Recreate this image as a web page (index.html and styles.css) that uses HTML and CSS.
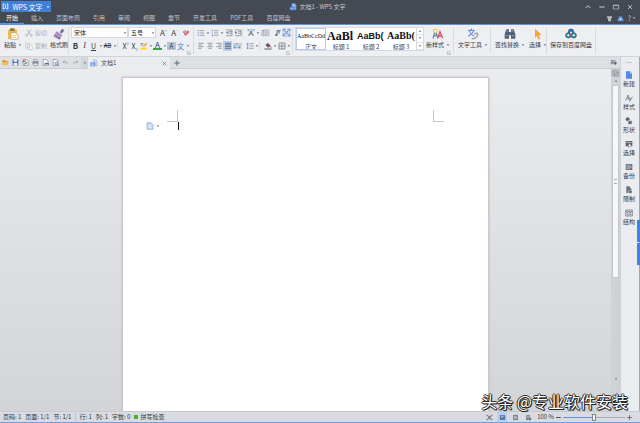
FILE: index.html
```html
<!DOCTYPE html>
<html lang="zh-CN">
<head>
<meta charset="utf-8">
<title>文档1 - WPS 文字</title>
<link rel="stylesheet" href="styles.css">
</head>
<body>
<svg class="sprite" aria-hidden="true">
  <symbol id="logo" viewBox="0 0 24 24"><path d="M9 3H4v17h4l4-5 4 5h4V3h-4M12 5v10" fill="none" stroke="#fff" stroke-width="3"/></symbol>
  <symbol id="clip" viewBox="0 0 36 36"><path d="M3 5h27v28H3z" fill="#edbd55"/><path d="M9 1h14v8H9z" fill="#8f754b"/><path d="M12 14h13l8 7v14H12z" fill="#fff" stroke="#c3964b" stroke-width="2"/><path d="M16 23h12M16 29h12" stroke="#e6b252" stroke-width="2"/></symbol>
  <symbol id="cut" viewBox="0 0 24 24"><path d="M6 2l11 15M18 2L7 17" fill="none" stroke="#a7aaaf" stroke-width="2.5"/><circle cx="5" cy="19" r="3" fill="none" stroke="#a7aaaf" stroke-width="2"/><circle cx="19" cy="19" r="3" fill="none" stroke="#a7aaaf" stroke-width="2"/></symbol>
  <symbol id="copy" viewBox="0 0 24 24"><path d="M2 4h11v14H2zM8 8h9l5 5v10H8z" fill="#f4f5f6" stroke="#b4b7bc" stroke-width="1.7"/></symbol>
  <symbol id="brush" viewBox="0 0 36 36"><path d="M20 12L28 2l6 5-8 10z" fill="#7d6796"/><path d="M11 10l17 12-4 6L6 16z" fill="#a18ab9"/><path d="M6 17l18 12-5 6L1 25z" fill="#8872a0"/><path d="M8 23l-2 4M14 26l-3 5" stroke="#cbbcd9" stroke-width="2"/></symbol>
  <symbol id="eraser" viewBox="0 0 24 24"><path d="M2 9l7-6 6 8-6 5z" fill="#75829a"/><path d="M9 11l9-7 4 5-10 11-6-3z" fill="#e1606b"/><path d="M6 5l6 9" stroke="#fff" stroke-width="2"/></symbol>
  <symbol id="bullets" viewBox="0 0 24 24"><path d="M2 5h3M2 12h3M2 19h3" stroke="#467fcd" stroke-width="3"/><path d="M8 5h14M8 12h14M8 19h14" stroke="#777d87" stroke-width="2"/></symbol>
  <symbol id="numbers" viewBox="0 0 24 24"><path d="M4 2v6M2 12h4M2 19h4M5 16v6" stroke="#467fcd" stroke-width="2"/><path d="M9 5h13M9 12h13M9 19h13" stroke="#777d87" stroke-width="2"/></symbol>
  <symbol id="outdent" viewBox="0 0 24 24"><path d="M3 3h18M12 8h9M12 13h9M3 20h18M21 3v17" fill="none" stroke="#747a84" stroke-width="2"/><path d="M10 6v9l-7-4z" fill="#467fcd"/></symbol>
  <symbol id="indent" viewBox="0 0 24 24"><path d="M3 3h18M12 8h9M12 13h9M3 20h18M21 3v17" fill="none" stroke="#747a84" stroke-width="2"/><path d="M3 6v9l7-4z" fill="#467fcd"/></symbol>
  <symbol id="scale" viewBox="0 0 24 24"><path d="M5 21l7-15 7 15M8 15h8" fill="none" stroke="#505762" stroke-width="2.4"/><path d="M2 3h20M5 0L2 3l3 4M19 0l3 3-3 4" fill="none" stroke="#467fcd" stroke-width="1.7"/></symbol>
  <symbol id="tabs" viewBox="0 0 24 24"><path d="M8 3h14v17H2V9h20M8 3v17M15 3v17M2 15h20" fill="none" stroke="#9da6b4" stroke-width="2"/><path d="M2 5h8" stroke="#71a0df" stroke-width="3"/></symbol>
  <symbol id="mark" viewBox="0 0 24 24"><path d="M9 19V5h11M15 5v9" fill="none" stroke="#4c535e" stroke-width="2.5"/><circle cx="7" cy="18" r="3" fill="#4c535e"/></symbol>
  <symbol id="frame" viewBox="0 0 24 24"><path d="M1 1h22v22H1z" fill="#c8d9f3"/><path d="M3 9V3h6M15 3h6v6M21 15v6h-6M9 21H3v-6M7 7l10 10M17 7L7 17" fill="none" stroke="#517bb9" stroke-width="2"/></symbol>
  <symbol id="left" viewBox="0 0 24 24"><path d="M4 4h16M4 9h10M4 14h16M4 19h10" stroke="#737982" stroke-width="2"/></symbol>
  <symbol id="center" viewBox="0 0 24 24"><path d="M4 4h16M7 9h10M4 14h16M7 19h10" stroke="#737982" stroke-width="2"/></symbol>
  <symbol id="right" viewBox="0 0 24 24"><path d="M4 4h16M10 9h10M4 14h16M10 19h10" stroke="#737982" stroke-width="2"/></symbol>
  <symbol id="justify" viewBox="0 0 24 24"><path d="M3 4h18M3 9h18M3 14h18M3 19h18" stroke="#596479" stroke-width="2.5"/></symbol>
  <symbol id="spread" viewBox="0 0 24 24"><path d="M3 3v17M21 3v17M7 5h10M7 9h10" stroke="#747d8c" stroke-width="2"/><path d="M3 16h18M8 12l-5 4 5 4M16 12l5 4-5 4" fill="none" stroke="#4d87d6" stroke-width="2"/></symbol>
  <symbol id="spacing" viewBox="0 0 24 24"><path d="M5 3v18M2 7l3-4 3 4M2 17l3 4 3-4" fill="none" stroke="#467fcd" stroke-width="2"/><path d="M11 5h12M11 12h12M11 19h12" stroke="#777d87" stroke-width="2"/></symbol>
  <symbol id="fill" viewBox="0 0 24 24"><path d="M4 9l8-6 8 8-8 6z" fill="#535a66"/><path d="M20 11l3 6h-5z" fill="#d35d51"/><path d="M1 19h22v4H1z" fill="#7b8089"/></symbol>
  <symbol id="border" viewBox="0 0 24 24"><path d="M3 3h18v18H3zM12 3v18M3 12h18" fill="none" stroke="#5f6671" stroke-width="2"/></symbol>
  <symbol id="pen" viewBox="0 0 24 24"><path d="M1 17h20v6H1z" fill="#f9df22"/><path d="M8 16l3-6 8-8 3 3-8 8z" fill="#ec9d34"/><path d="M2 5h8M2 9h6" stroke="#555b65" stroke-width="2"/></symbol>
  <symbol id="styles" viewBox="0 0 36 36"><path d="M3 31l7-22 8 22M6 23h10" fill="none" stroke="#5685c4" stroke-width="4"/><path d="M17 31l7-20 8 20M20 24h9" fill="none" stroke="#d65767" stroke-width="4"/><circle cx="10" cy="9" r="6" fill="#fff4bf" stroke="#f4bb43" stroke-width="3"/></symbol>
  <symbol id="texttool" viewBox="0 0 36 36"><path d="M3 7h20M13 2v5M7 9q5 12 15 16M20 9Q16 20 3 25" fill="none" stroke="#4a80d9" stroke-width="3"/><path d="M22 18q8-5 10 1t-7 11q-8 5-10-1" fill="none" stroke="#999fa7" stroke-width="4"/></symbol>
  <symbol id="find" viewBox="0 0 36 36"><path d="M7 4h8v8h6V4h8l5 14v14H21V22h-6v10H2V18z" fill="#50617a"/><path d="M5 23h7M24 23h7M8 9h6M22 9h6" stroke="#b0bdce" stroke-width="2"/></symbol>
  <symbol id="cursor" viewBox="0 0 36 36"><path d="M9 2l20 19-9 1 5 10-5 3-5-11-6 6z" fill="#f6a629"/></symbol>
  <symbol id="cloud" viewBox="0 0 36 36"><circle cx="18" cy="11" r="8" fill="#267ebd" stroke="#333b42" stroke-width="2"/><circle cx="10" cy="22" r="8" fill="#21a2ae" stroke="#333b42" stroke-width="2"/><circle cx="26" cy="22" r="8" fill="#21a2ae" stroke="#333b42" stroke-width="2"/><circle cx="18" cy="14" r="3" fill="#fff"/><circle cx="10" cy="22" r="3" fill="#fff"/><circle cx="26" cy="22" r="3" fill="#fff"/><path d="M13 19l5-3 5 3-5 5z" fill="#dc3b40"/></symbol>
  <symbol id="folder" viewBox="0 0 24 24"><path d="M2 3h8l3 4h8v4H7L2 20z" fill="#d99c2e"/><path d="M7 10h16l-4 11H2z" fill="#f6bc4b"/></symbol>
  <symbol id="save" viewBox="0 0 24 24"><path d="M2 2h20v20H2z" fill="#4779bf"/><path d="M7 2h10v7H7zM6 14h12v8H6z" fill="#eef5ff"/></symbol>
  <symbol id="pdf" viewBox="0 0 24 24"><path d="M4 2h12l5 5v15H4z" fill="#fff" stroke="#676d77" stroke-width="2"/><path d="M2 5h11v6H2z" fill="#d85a54"/><path d="M7 18c5-2 9-4 10-7" fill="none" stroke="#3d9d82" stroke-width="4"/></symbol>
  <symbol id="print" viewBox="0 0 24 24"><path d="M6 2h12v6H6z" fill="#fff" stroke="#6e7888" stroke-width="2"/><path d="M2 8h20v10H2z" fill="#7d899d"/><path d="M6 14h12v8H6z" fill="#f7fbff" stroke="#6e7888" stroke-width="2"/></symbol>
  <symbol id="quickprint" viewBox="0 0 24 24"><path d="M4 2h12l4 4v16H4z" fill="#fff" stroke="#667081" stroke-width="2"/><path d="M9 13h14v8H9z" fill="#456d9e"/><path d="M12 10h8v4h-8zM12 18h8v4h-8z" fill="#dce9f8"/></symbol>
  <symbol id="preview" viewBox="0 0 24 24"><path d="M4 2h12l4 4v16H4z" fill="#fff" stroke="#667081" stroke-width="2"/><circle cx="15" cy="15" r="5" fill="#c9e0f8" stroke="#456d9e" stroke-width="2"/><path d="M18 19l5 4" stroke="#456d9e" stroke-width="3"/></symbol>
  <symbol id="undo" viewBox="0 0 24 24"><path d="M9 5l-5 5 5 5M4 10h9q6 0 6 8" fill="none" stroke="#9298a1" stroke-width="2.5"/></symbol>
  <symbol id="redo" viewBox="0 0 24 24"><path d="M15 5l5 5-5 5M20 10h-9q-6 0-6 8" fill="none" stroke="#9298a1" stroke-width="2.5"/></symbol>
  <symbol id="doc" viewBox="0 0 24 24"><path d="M8 1h9l5 5v15H8z" fill="#70a5ed"/><path d="M2 12h13v10H2z" fill="#4a88de"/><path d="M5 16h7M11 7h7" stroke="#e6f1ff" stroke-width="2"/></symbol>
  <symbol id="tabdoc" viewBox="0 0 24 24"><path d="M9 1h9l4 5v16H9z" fill="#b2cbea"/><path d="M1 10h14v12H1z" fill="#6c9bd5"/><path d="M4 15h8M12 7h7M4 19h8" stroke="#e7f1fd" stroke-width="2"/></symbol>
  <symbol id="new" viewBox="0 0 24 24"><path d="M3 1h12l6 6v16H3z" fill="#4f88e5"/><path d="M15 1v7h6z" fill="#b3cdf8"/></symbol>
  <symbol id="para" viewBox="0 0 24 24"><path d="M3 2h12l6 6v14H3z" fill="#c3d6f4" stroke="#86a9dd" stroke-width="2"/><path d="M7 11h10M7 16h10" stroke="#fff" stroke-width="2"/></symbol>
  <symbol id="style" viewBox="0 0 24 24"><path d="M2 20L9 3l5 17M5 14h7M13 10l4 7 5-9M17 17l-3 6" fill="none" stroke="#59606c" stroke-width="2"/></symbol>
  <symbol id="shape" viewBox="0 0 24 24"><circle cx="8" cy="7" r="6" fill="#5c6470"/><path d="M9 11h12v11H9z" fill="#5c6470" stroke="#e9eaed" stroke-width="2"/></symbol>
  <symbol id="select" viewBox="0 0 24 24"><path d="M2 3h20v16H2z" fill="#59616d"/><path d="M4 7h16" stroke="#e8eaed" stroke-width="2"/><path d="M11 10l10 8-7 1-3 4z" fill="#fff" stroke="#59616d"/></symbol>
  <symbol id="backup" viewBox="0 0 24 24"><path d="M2 3h20v18H2z" fill="#6f7782"/><path d="M12 6v12M5 8h4M5 12h4M5 16h4M15 8l4 4-4 4" fill="none" stroke="#e5e8ec" stroke-width="2"/></symbol>
  <symbol id="limit" viewBox="0 0 24 24"><path d="M4 1h9l4 5v15H4z" fill="#68707c"/><path d="M11 13h10v9H11z" fill="#535b67" stroke="#eceef0" stroke-width="2"/><path d="M13 13v-3h6v3" fill="none" stroke="#535b67" stroke-width="2"/></symbol>
  <symbol id="struct" viewBox="0 0 24 24"><path d="M2 3h20v18H2zM2 7h20M12 7v14" fill="none" stroke="#646c78" stroke-width="2"/><path d="M5 11h4M5 16h4M15 11h4M15 16h4" stroke="#646c78" stroke-width="3"/></symbol>
  <symbol id="down" viewBox="0 0 12 12"><path d="M2 4h8l-4 5z" fill="currentColor"/></symbol>
  <symbol id="up" viewBox="0 0 12 12"><path d="M2 8h8L6 3z" fill="currentColor"/></symbol>
  <symbol id="corner" viewBox="0 0 12 12"><path d="M1 1h9M1 1v9h4M5 5l5 5M10 5v5H5" fill="none" stroke="#8d949f" stroke-width="1.4"/></symbol>
  <symbol id="chevron" viewBox="0 0 24 24"><path d="M5 15l7-7 7 7" fill="none" stroke="#c8cbd1" stroke-width="3"/></symbol>
  <symbol id="min" viewBox="0 0 24 24"><path d="M4 12h16" stroke="currentColor" stroke-width="3"/></symbol>
  <symbol id="max" viewBox="0 0 24 24"><path d="M4 6h16v12H4zM4 8h16" fill="none" stroke="currentColor" stroke-width="2"/></symbol>
  <symbol id="panes" viewBox="0 0 24 24"><path d="M4 4h14v11H4zM8 9h13v11H8z" fill="#e4e6ea" stroke="#6a717d" stroke-width="2"/></symbol>
  <symbol id="close" viewBox="0 0 24 24"><path d="M6 6l12 12M18 6L6 18" stroke="currentColor" stroke-width="2.5"/></symbol>
  <symbol id="plus" viewBox="0 0 24 24"><path d="M4 12h16M12 4v16" stroke="#5f6671" stroke-width="3"/></symbol>
  <symbol id="shirt" viewBox="0 0 24 24"><path d="M3 5l6-2q3 4 6 0l6 2-1 6h-3v10H7V11H4z" fill="#b9bdc5"/></symbol>
  <symbol id="user" viewBox="0 0 24 24"><path d="M5 11q0-8 7-8t7 8l3 2v8H2v-8z" fill="#5890df"/><circle cx="12" cy="14" r="3" fill="#fff"/></symbol>
  <symbol id="list" viewBox="0 0 24 24"><path d="M3 6h13M3 11h8M3 16h6" stroke="#5d6470" stroke-width="3"/><path d="M11 12h12l-6 8zM18 5v9" fill="#5d6470" stroke="#5d6470" stroke-width="2"/></symbol>
  <symbol id="full" viewBox="0 0 24 24"><path d="M3 8V4h5M16 4h5v4M21 16v4h-5M8 20H3v-4M8 8h8v8H8z" fill="#8b929c" stroke="#5f6772" stroke-width="2"/></symbol>
  <symbol id="pageview" viewBox="0 0 24 24"><path d="M3 4h18v16H3z" fill="#526b93"/><path d="M6 8h12M6 12h7" stroke="#d9e7fa" stroke-width="2"/></symbol>
  <symbol id="outline" viewBox="0 0 24 24"><path d="M4 3h16v18H4z" fill="#737b86"/><path d="M7 8h10M7 12h10M7 16h10" stroke="#e4e6e9" stroke-width="2"/></symbol>
  <symbol id="web" viewBox="0 0 24 24"><path d="M4 3h13v18H4z" fill="#7a828e"/><path d="M7 7h7M7 11h7" stroke="#e4e6e9" stroke-width="2"/><circle cx="17" cy="17" r="5" fill="#606975" stroke="#e4e6e9"/></symbol>
</svg>

<div class="app">
  <header class="titlebar">
    <button class="brand"><svg class="i7"><use href="#logo"/></svg><span>WPS 文字</span><svg class="caret"><use href="#down"/></svg></button>
    <h1 class="title"><svg class="i8"><use href="#doc"/></svg>文档1 - WPS 文字</h1>
    <div class="window-buttons">
      <button aria-label="折叠"><svg class="i8"><use href="#chevron"/></svg></button>
      <button aria-label="最小化"><svg class="i8"><use href="#min"/></svg></button>
      <button aria-label="最大化"><svg class="i8"><use href="#max"/></svg></button>
      <button aria-label="关闭"><svg class="i8"><use href="#close"/></svg></button>
    </div>
  </header>
  <nav class="menu">
    <a href="#" class="active">开始</a><a href="#">插入</a><a href="#">页面布局</a><a href="#">引用</a><a href="#">审阅</a><a href="#">视图</a><a href="#">章节</a><a href="#">开发工具</a><a href="#">PDF工具</a><a href="#">百度网盘</a>
    <div class="menu-right">
      <button aria-label="皮肤"><svg class="i7"><use href="#shirt"/></svg></button>
      <button aria-label="用户"><svg class="i7"><use href="#user"/></svg></button>
      <button class="help">?<svg class="caret"><use href="#down"/></svg></button>
    </div>
  </nav>

  <section class="ribbon">
    <div class="group clipboard">
      <button class="big"><svg class="i12"><use href="#clip"/></svg><span>粘贴<svg class="caret"><use href="#down"/></svg></span></button>
      <div class="stack">
        <button class="mini" disabled><svg class="i8"><use href="#cut"/></svg>剪切</button>
        <button class="mini" disabled><svg class="i8"><use href="#copy"/></svg>复制</button>
      </div>
      <button class="big"><svg class="i12"><use href="#brush"/></svg><span>格式刷</span></button>
    </div>
    <div class="group font">
      <div class="row fields">
        <label class="field family"><select aria-label="字体"><option>宋体</option></select><svg class="caret"><use href="#down"/></svg></label>
        <label class="field size"><select aria-label="字号"><option>五号</option></select><svg class="caret"><use href="#down"/></svg></label>
        <button class="t grow">A<sup>+</sup></button><button class="t grow">A<sup>-</sup></button>
        <button class="t grow" aria-label="清除格式"><svg class="i8"><use href="#eraser"/></svg></button>
      </div>
      <div class="row">
        <button class="t bold">B</button><button class="t italic">I</button><button class="t under">U</button><button class="c" aria-label="更多"><svg class="caret"><use href="#down"/></svg></button><button class="t strike">AB</button><button class="c" aria-label="更多"><svg class="caret"><use href="#down"/></svg></button><i class="sep"></i><button class="t">X<sup>2</sup></button><button class="t">X<sub>2</sub></button><button class="t" aria-label="突出显示"><svg class="i8"><use href="#pen"/></svg></button><button class="c" aria-label="更多"><svg class="caret"><use href="#down"/></svg></button><button class="t color">A</button><button class="c" aria-label="更多"><svg class="caret"><use href="#down"/></svg></button><button class="t shade">A</button><button class="t phonetic">文</button><button class="c" aria-label="更多"><svg class="caret"><use href="#down"/></svg></button>
      </div>
      <button class="launcher" aria-label="字体设置"><svg class="caret"><use href="#corner"/></svg></button>
    </div>
    <div class="group para">
      <div class="row">
        <button class="t" aria-label="项目符号"><svg class="i8"><use href="#bullets"/></svg></button><button class="c" aria-label="更多"><svg class="caret"><use href="#down"/></svg></button><button class="t" aria-label="编号"><svg class="i8"><use href="#numbers"/></svg></button><button class="c" aria-label="更多"><svg class="caret"><use href="#down"/></svg></button><button class="t" aria-label="减少缩进"><svg class="i8"><use href="#outdent"/></svg></button><button class="t" aria-label="增加缩进"><svg class="i8"><use href="#indent"/></svg></button><i class="sep"></i><button class="t" aria-label="字符缩放"><svg class="i8"><use href="#scale"/></svg></button><button class="c" aria-label="更多"><svg class="caret"><use href="#down"/></svg></button><button class="t" aria-label="制表位"><svg class="i8"><use href="#tabs"/></svg></button><i class="sep"></i><button class="t" aria-label="段落标记"><svg class="i8"><use href="#mark"/></svg></button><button class="t" aria-label="段落布局"><svg class="i9"><use href="#frame"/></svg></button>
      </div>
      <div class="row">
        <button class="t" aria-label="左对齐"><svg class="i8"><use href="#left"/></svg></button><button class="t" aria-label="居中"><svg class="i8"><use href="#center"/></svg></button><button class="t" aria-label="右对齐"><svg class="i8"><use href="#right"/></svg></button><button class="t on" aria-label="两端对齐"><svg class="i8"><use href="#justify"/></svg></button><button class="t" aria-label="分散对齐"><svg class="i8"><use href="#spread"/></svg></button><i class="sep"></i><button class="t" aria-label="行距"><svg class="i8"><use href="#spacing"/></svg></button><button class="c" aria-label="更多"><svg class="caret"><use href="#down"/></svg></button><i class="sep"></i><button class="t" aria-label="底纹"><svg class="i8"><use href="#fill"/></svg></button><button class="c" aria-label="更多"><svg class="caret"><use href="#down"/></svg></button><button class="t" aria-label="边框"><svg class="i8"><use href="#border"/></svg></button><button class="c" aria-label="更多"><svg class="caret"><use href="#down"/></svg></button>
      </div>
      <button class="launcher" aria-label="段落设置"><svg class="caret"><use href="#corner"/></svg></button>
    </div>
    <div class="group style-group">
      <div class="gallery">
        <button class="on"><span class="sample">AaBbCcDd</span><span>正文</span></button>
        <button><span class="sample h1">AaBl</span><span>标题 1</span></button>
        <button><span class="sample h2">AaBb(</span><span>标题 2</span></button>
        <button><span class="sample h3">AaBb(</span><span>标题 3</span></button>
        <div class="scroller"><button aria-label="上"><svg class="caret"><use href="#up"/></svg></button><button aria-label="下"><svg class="caret"><use href="#down"/></svg></button><button aria-label="更多样式"><svg class="caret"><use href="#down"/></svg></button></div>
      </div>
      <button class="big"><svg class="i12"><use href="#styles"/></svg><span>新样式<svg class="caret"><use href="#down"/></svg></span></button>
      <button class="launcher" aria-label="样式设置"><svg class="caret"><use href="#corner"/></svg></button>
    </div>
    <div class="group tools"><button class="big"><svg class="i12"><use href="#texttool"/></svg><span>文字工具<svg class="caret"><use href="#down"/></svg></span></button></div>
    <div class="group edit"><button class="big"><svg class="i12"><use href="#find"/></svg><span>查找替换<svg class="caret"><use href="#down"/></svg></span></button><button class="big"><svg class="i12"><use href="#cursor"/></svg><span>选择<svg class="caret"><use href="#down"/></svg></span></button></div>
    <div class="group disk"><button class="big"><svg class="i12"><use href="#cloud"/></svg><span>保存到百度网盘</span></button></div>
  </section>

  <div class="main">
    <div class="editor">
      <div class="tabbar">
        <div class="quick">
          <button aria-label="打开"><svg class="i7"><use href="#folder"/></svg></button><button aria-label="保存"><svg class="i7"><use href="#save"/></svg></button><button aria-label="输出为PDF"><svg class="i7"><use href="#pdf"/></svg></button><button aria-label="打印"><svg class="i7"><use href="#print"/></svg></button><button aria-label="快速打印"><svg class="i7"><use href="#quickprint"/></svg></button><button aria-label="打印预览"><svg class="i7"><use href="#preview"/></svg></button><button aria-label="撤销"><svg class="i7"><use href="#undo"/></svg></button><button aria-label="恢复"><svg class="i7"><use href="#redo"/></svg></button>
        </div>
        <button class="quick-more" aria-label="自定义"><svg class="caret"><use href="#down"/></svg></button>
        <div class="doctab"><svg class="i8"><use href="#tabdoc"/></svg><span>文档1</span><button aria-label="关闭文档"><svg class="i7"><use href="#close"/></svg></button></div>
        <button class="add" aria-label="新建标签"><svg class="i8"><use href="#plus"/></svg></button>
        <button class="tablist" aria-label="标签列表"><svg class="i7"><use href="#list"/></svg></button>
      </div>
      <div class="workspace">
        <div class="canvas">
          <main class="page">
            <div class="margins">
              <button class="section" aria-label="段落选项"><svg class="i8"><use href="#para"/></svg><svg class="caret"><use href="#down"/></svg></button>
              <span class="crop crop-left"></span><span class="crop crop-right"></span>
            </div>
            <div class="text"><span class="insertion"></span></div>
          </main>
        </div>
        <div class="scrollbar">
          <button aria-label="视图选项"><svg class="i7"><use href="#panes"/></svg></button>
          <button aria-label="向上"><svg class="caret"><use href="#up"/></svg></button>
          <div class="track"><div class="thumb"><i></i></div></div>
          <button class="scroll-down" aria-label="向下"><svg class="caret"><use href="#down"/></svg></button>
        </div>
      </div>
    </div>
    <aside class="side">
      <i class="grip"></i>
      <button><svg class="i8"><use href="#new"/></svg>新建</button>
      <button><svg class="i8"><use href="#style"/></svg>样式</button>
      <button><svg class="i8"><use href="#shape"/></svg>形状</button>
      <button><svg class="i8"><use href="#select"/></svg>选择</button>
      <button><svg class="i8"><use href="#backup"/></svg>备份</button>
      <button><svg class="i8"><use href="#limit"/></svg>限制</button>
      <button><svg class="i8"><use href="#struct"/></svg>结构</button>
      <div class="edge"><i></i><i></i></div>
    </aside>
  </div>

  <footer class="status">
    <span>页码: 1</span><span>页面: 1/1</span><span>节: 1/1</span><span class="div">行: 1</span><span>列: 1</span><span>字数: 0</span>
    <button class="spell"><i></i>拼写检查</button>
    <div class="views">
      <button aria-label="全屏"><svg class="i7"><use href="#full"/></svg></button><button class="on" aria-label="页面视图"><svg class="i7"><use href="#pageview"/></svg></button><button aria-label="大纲"><svg class="i7"><use href="#outline"/></svg></button><button aria-label="Web版式"><svg class="i7"><use href="#web"/></svg></button>
    </div>
    <div class="zoombar">
      <label for="zoom">100 %</label>
      <button aria-label="缩小"><svg class="i7"><use href="#min"/></svg></button>
      <input id="zoom" type="range" min="0" max="100" value="50">
      <button aria-label="放大"><svg class="i7"><use href="#plus"/></svg></button>
    </div>
  </footer>
  <div class="watermark">头条 @专业软件安装</div>
</div>
</body>
</html>
```
FILE: styles.css
```css
* { box-sizing: border-box; }
html, body { height: 100%; margin: 0; }
body { font: 6px/8px "Noto Sans CJK SC", sans-serif; color: #343a44; overflow: hidden; }
button, select, input { font: inherit; color: inherit; margin: 0; padding: 0; border: 0; background: none; }
button { display: flex; align-items: center; justify-content: center; white-space: nowrap; }
a { color: inherit; text-decoration: none; }
svg { display: block; flex: none; }
.sprite { position: absolute; width: 0; height: 0; }
.i7 { width: 7px; height: 7px; }
.i8 { width: 8px; height: 8px; }
.i9 { width: 9px; height: 9px; }
.i12 { width: 12px; height: 12px; }
.caret { width: 4px; height: 4px; color: #727883; }

.app { height: 100%; display: flex; flex-direction: column; position: relative; background: #ebecef; }

.titlebar { display: grid; grid-template-columns: 1fr auto 1fr; align-items: center; height: 12px; padding: 1px 6px 0 1px; background: #454952; color: #c8cbd1; }
.brand { justify-self: start; width: 50px; height: 11px; gap: 3px; background: #3f80d8; color: #fff; font-size: 7px; }
.brand .caret { color: #fff; }
.title { display: flex; align-items: center; gap: 2px; margin: 0; font-size: 6px; font-weight: 400; }
.window-buttons { display: flex; justify-content: flex-end; gap: 6px; }

.menu { display: flex; gap: 1px; height: 13px; padding-right: 4px; background: #454952; color: #c0c3c9; border-bottom: 1px solid #5a95e4; }
.menu > a { padding: 2px 6px 0; line-height: 8px; }
.menu > .active { color: #fff; border-bottom: 1px solid #5a95e4; }
.menu-right { display: flex; gap: 4px; margin-left: auto; }
.menu-right .caret { color: #b9bdc5; }
.help { font-size: 7px; gap: 1px; }

.ribbon { display: flex; height: 32px; background: #eeeff2; border-bottom: 1px solid #d2d4d9; }
.group { display: flex; align-items: flex-start; position: relative; flex: none; padding-top: 2px; }
.group::after { content: ""; position: absolute; right: 0; top: 2px; bottom: 2px; width: 1px; background: #d9dbe0; }
.big { flex-direction: column; gap: 1px; padding-top: 1px; }
.big span { display: flex; align-items: center; gap: 2px; }
.clipboard { width: 69px; padding-left: 4px; gap: 3px; }
.stack { display: flex; flex-direction: column; gap: 2px; }
.mini { height: 11px; gap: 2px; color: #a9acb2; }
.font, .para { flex-direction: column; gap: 2px; }
.font { width: 125px; padding-left: 2px; }
.para { width: 99px; padding-left: 2px; }
.row { display: flex; align-items: center; height: 11px; }
.t { width: 9px; height: 10px; font-size: 7px; }
.c { width: 5px; height: 10px; }
.t sup, .t sub { font-size: 4px; line-height: 4px; color: #467fcd; }
.t sup { align-self: flex-start; }
.t sub { align-self: flex-end; }
.grow { width: 11px; font-size: 8px; }
.sep { width: 4px; height: 8px; border-left: 1px solid #dcdee3; }
.bold { font-weight: 700; font-size: 8px; }
.italic { font: italic 8px/8px "Liberation Serif", serif; }
.under { text-decoration: underline; }
.strike { font-size: 6px; text-decoration: line-through; }
.color { font-size: 8px; line-height: 8px; height: 9px; border-bottom: 2px solid #35a635; color: #26446f; }
.shade { height: 8px; background: #b9c4d4; }
.phonetic { font-size: 7px; color: #467fcd; }
.t.on { background: #b9cdee; }
.field { position: relative; display: flex; align-items: center; height: 11px; background: #fff; border: 1px solid #d5d8de; }
.field select { appearance: none; width: 100%; height: 9px; padding-left: 2px; color: #22262c; }
.field .caret { position: absolute; right: 0; pointer-events: none; }
.family { width: 57px; }
.size { width: 28px; margin-right: 2px; }
.launcher { position: absolute; right: 3px; bottom: 1px; }

.style-group { width: 161px; padding-left: 2px; gap: 2px; }
.gallery { display: flex; height: 24px; background: #fff; border: 1px solid #d5d9e2; }
.gallery > button { flex-direction: column; justify-content: flex-end; align-items: center; width: 30px; height: 22px; }
.gallery > button span:last-child { line-height: 7px; }
.gallery > .on { outline: 1px solid #b5ceef; outline-offset: -1px; }
.sample { width: 28px; height: 14px; overflow: hidden; text-align: left; font: 6px/14px "Liberation Serif", serif; color: #111; }
.sample.h1 { font-size: 12px; font-weight: 700; }
.sample.h2 { font: 700 9px/14px "Liberation Sans", sans-serif; }
.sample.h3 { font-size: 10px; font-weight: 700; }
.scroller { display: flex; flex-direction: column; width: 7px; border-left: 1px solid #d5d9e2; }
.scroller button { flex: 1; border-bottom: 1px solid #e2e4e9; }
.tools { width: 37px; padding-left: 4px; }
.edit { width: 56px; padding-left: 4px; gap: 4px; }
.disk { width: 49px; padding-left: 3px; }

.main { flex: 1; display: flex; min-height: 0; }
.editor { flex: 1; display: flex; flex-direction: column; min-width: 0; }
.tabbar { display: flex; height: 12px; background: #dddfe3; border-bottom: 1px solid #c9ccd2; }
.quick { display: flex; align-items: center; gap: 3px; padding: 0 2px; }
.quick button { width: 7px; }
.quick-more { width: 7px; background: #d2d5da; }
.doctab { display: flex; align-items: center; gap: 3px; width: 82px; height: 12px; padding: 0 2px; background: #ebecef; color: #454b55; }
.doctab button { margin-left: auto; color: #6c737e; }
.add { width: 14px; }
.tablist { margin-left: auto; width: 13px; }
.workspace { flex: 1; display: flex; min-height: 0; background: linear-gradient(#ebecee, #d3d4d7); }
.canvas { flex: 1; display: flex; justify-content: center; padding-top: 8px; overflow: hidden; }
.page { width: 60%; background: #fff; border: 1px solid #c8c9ce; border-bottom: 0; box-shadow: 0 0 2px #b8b9be; }
.margins { position: relative; height: 44px; padding: 0 12%; display: flex; justify-content: space-between; align-items: flex-end; }
.crop { width: 11px; height: 12px; border-bottom: 1px solid #c4c5c8; }
.crop-left { border-right: 1px solid #c4c5c8; }
.crop-right { border-left: 1px solid #c4c5c8; }
.section { position: absolute; left: 23px; top: 44px; gap: 2px; }
.text { padding: 0 15%; }
.insertion { display: block; width: 1px; height: 8px; background: #111; }
.scrollbar { width: 9px; display: flex; flex-direction: column; align-items: center; background: #d0d2d7; }
.scrollbar > button { width: 9px; height: 8px; }
.scrollbar > button:first-child { background: #bfc2c8; }
.scrollbar > .scroll-down { height: 34px; align-items: flex-start; }
.track { flex: 1; width: 7px; }
.thumb { height: 66%; display: flex; align-items: center; justify-content: center; background: #f7f7f8; border: 1px solid #c4c7ce; }
.thumb i { width: 3px; height: 5px; border-top: 1px solid #aaaeb5; border-bottom: 1px solid #aaaeb5; }
.side { position: relative; width: 20px; display: flex; flex-direction: column; align-items: center; background: #ebecef; border-left: 1px solid #cfd1d6; border-right: 1px solid #82aae2; padding-right: 2px; }
.grip { width: 6px; height: 1px; margin: 5px 0 8px; background: #c8cad0; }
.side > button { flex-direction: column; gap: 1px; height: 17px; margin-bottom: 6px; }
.edge { position: absolute; right: -1px; top: 46%; width: 3px; display: flex; flex-direction: column; gap: 1px; }
.edge i { height: 22px; background: #3f83e6; }

.status { display: flex; align-items: center; gap: 4px; height: 12px; padding: 0 7px 0 3px; background: #d9dbe0; border-top: 1px solid #c7cad0; border-bottom: 1px solid #6f9edf; white-space: nowrap; }
.div { border-left: 1px solid #bfc2c8; padding-left: 3px; }
.spell { gap: 2px; }
.spell i { width: 4px; height: 4px; background: #49b32e; }
.views { display: flex; gap: 3px; margin-left: auto; }
.views button { width: 10px; height: 10px; }
.views .on { background: #b7cff2; }
.zoombar { display: flex; align-items: center; gap: 1px; }
.zoombar #zoom { appearance: none; width: 62px; height: 8px; background: linear-gradient(90deg, #5b91df 50%, #a9adb5 50%) center / 100% 1px no-repeat; }
#zoom::-webkit-slider-thumb { appearance: none; width: 4px; height: 7px; background: #f5f6f8; border: 1px solid #7e858f; }

.watermark { position: absolute; right: 12px; bottom: 12px; font-size: 16px; line-height: 20px; color: #fff; text-shadow: 1px 1px 0 #222, -1px 0 0 #222, 0 -1px 0 #333, 1px 0 0 #222, 0 1px 0 #222; pointer-events: none; }
```
